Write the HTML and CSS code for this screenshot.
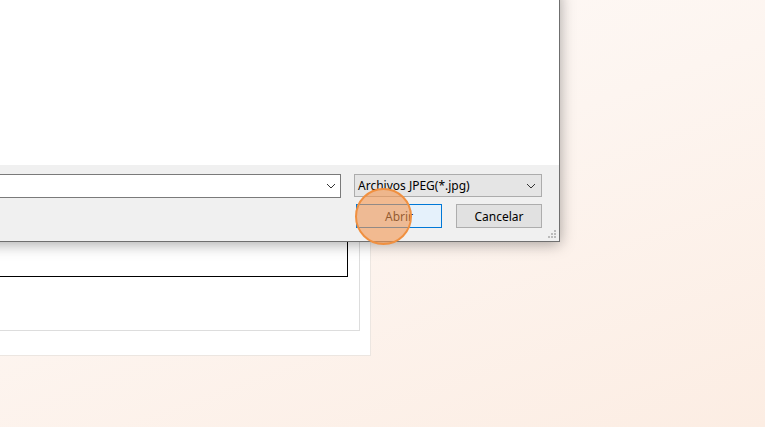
FILE: index.html
```html
<!DOCTYPE html>
<html lang="es">
<head>
    <meta charset="UTF-8">
    <meta name="viewport" content="width=device-width, initial-scale=1.0">
    <title>Abrir</title>
    <link rel="stylesheet" href="styles.css">
</head>
<body>
    <div class="desk">
        <!-- ventana de fondo -->
        <div class="panel">
            <div class="panel-inner">
                <div class="blackbox"></div>
            </div>
        </div>

        <!-- dialogo abrir archivo -->
        <div class="dialog">
            <div class="dlg-body"></div>
            <div class="dlg-foot">
                <div class="row">
                    <div class="name-input">
                        <svg class="chev" width="10" height="6" viewBox="0 0 10 6"><path d="M1 1l4 4 4-4" fill="none" stroke="#333" stroke-width="1"/></svg>
                    </div>
                    <div class="type-select">
                        <span>Archivos JPEG(*.jpg)</span>
                        <svg class="chev" width="10" height="6" viewBox="0 0 10 6"><path d="M1 1l4 4 4-4" fill="none" stroke="#333" stroke-width="1"/></svg>
                    </div>
                </div>
                <div class="row btns">
                    <div class="btn btn-open">Abrir</div>
                    <div class="btn">Cancelar</div>
                </div>
                <svg class="grip" width="9" height="9" viewBox="0 0 9 9">
                    <rect x="6" y="0" width="2" height="2" fill="#bbb"/>
                    <rect x="3" y="3" width="2" height="2" fill="#bbb"/>
                    <rect x="6" y="3" width="2" height="2" fill="#bbb"/>
                    <rect x="0" y="6" width="2" height="2" fill="#bbb"/>
                    <rect x="3" y="6" width="2" height="2" fill="#bbb"/>
                    <rect x="6" y="6" width="2" height="2" fill="#bbb"/>
                </svg>
            </div>
        </div>

        <div class="click"></div>
    </div>
</body>
</html>
```

FILE: styles.css
```css
*{
    margin: 0;
    padding: 0;
    box-sizing: border-box;
}
html,body{
    height: 100%;
}
body{
    font-family: "Noto Sans", "Open Sans", sans-serif;
    font-size: 12px;
    color: #000;
    overflow: hidden;
}
.desk{
    position: relative;
    width: 765px;
    height: 427px;
    background: linear-gradient(160deg, #fefbf9 0%, #fdf5f0 45%, #fcede3 100%);
}
.panel{
    position: absolute;
    left: -10px;
    top: 100px;
    width: 381px;
    height: 256px;
    background: #fff;
    border: 1px solid #ece6e1;
    padding: 0 10px 24px 0;
}
.panel-inner{
    height: 100%;
    border: 1px solid #ddd;
    border-left: none;
    border-top: none;
    padding-right: 11px;
}
.blackbox{
    height: 176px;
    border: 1px solid #000;
    background: linear-gradient(#e6e6e6, #fff 40%);
}
.dialog{
    position: absolute;
    left: -30px;
    top: -10px;
    width: 590px;
    height: 252px;
    background: #fff;
    border: 1px solid #6f6f6f;
    box-shadow: 0 2px 14px rgba(0, 0, 0, .35);
    display: flex;
    flex-direction: column;
}
.dlg-body{
    height: 174px;
    background: #fff;
}
.dlg-foot{
    position: relative;
    flex: 1;
    background: #f0f0f0;
    padding: 9px 17px 0 10px;
    display: flex;
    flex-direction: column;
    gap: 6px;
}
.row{
    display: flex;
    align-items: flex-start;
}
.name-input{
    flex: 1;
    height: 24px;
    background: #fff;
    border: 1px solid #7a7a7a;
    display: flex;
    align-items: center;
    justify-content: flex-end;
    padding-right: 4px;
}
.type-select{
    margin-left: 13px;
    width: 188px;
    height: 23px;
    background: #e5e5e5;
    border: 1px solid #acacac;
    display: flex;
    align-items: center;
    justify-content: space-between;
    padding: 0 5px 0 3px;
}
.btns{
    justify-content: flex-end;
    gap: 14px;
}
.btn{
    width: 86px;
    height: 24px;
    background: #e1e1e1;
    border: 1px solid #adadad;
    display: flex;
    align-items: center;
    justify-content: center;
}
.btn-open{
    background: #e5f1fb;
    border-color: #0078d7;
}
.grip{
    position: absolute;
    right: 2px;
    bottom: 2px;
}
.click{
    position: absolute;
    left: 355px;
    top: 188px;
    width: 57px;
    height: 57px;
    border-radius: 50%;
    background: rgba(243, 150, 80, .6);
    border: 2px solid #f09040;
}
```
